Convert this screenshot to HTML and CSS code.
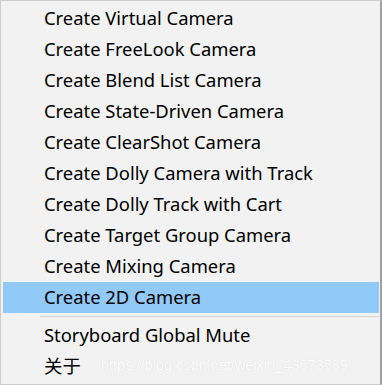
FILE: index.html
```html
<!DOCTYPE html>
<html lang="en">
<head>
  <meta charset="utf-8">
  <title>Cinemachine menu</title>
  <link rel="stylesheet" href="styles.css">
</head>
<body>
  <div class="menu">
    <div class="item">Create Virtual Camera</div>
    <div class="item">Create FreeLook Camera</div>
    <div class="item">Create Blend List Camera</div>
    <div class="item">Create State-Driven Camera</div>
    <div class="item">Create ClearShot Camera</div>
    <div class="item">Create Dolly Camera with Track</div>
    <div class="item">Create Dolly Track with Cart</div>
    <div class="item">Create Target Group Camera</div>
    <div class="item">Create Mixing Camera</div>
    <div class="item active">Create 2D Camera</div>
    <div class="sep"></div>
    <div class="item">Storyboard Global Mute</div>
    <div class="item">关于</div>

    <div class="watermark">https://blog.csdn.net/weixin_43673589</div>
  </div>
</body>
</html>
```

FILE: styles.css
```css
* {
  margin: 0;
  padding: 0;
  box-sizing: border-box;
}

body {
  background: #f2f2f2;
}

.menu {
  position: relative;
  width: 382px;
  height: 385px;
  background: #f2f2f2;
  border: 1px solid #cccccc;
  border-right: 2px solid #a0a0a0;
  padding: 2px 1px 0 2px;
  font-family: "Noto Sans", "Noto Sans CJK SC", sans-serif;
  font-size: 18.4px;
  color: #000;
}

.item {
  height: 31px;
  line-height: 29px;
  padding-left: 41px;
  padding-bottom: 2px;
  white-space: nowrap;
}

.item.active {
  background: #91c9f7;
}

.sep {
  height: 7px;
  margin-left: 37px;
  border-top: 1px solid #d7d7d7;
  position: relative;
  top: 3px;
}

.watermark {
  position: absolute;
  left: 100px;
  top: 356px;
  font-family: "Liberation Sans", Arial, sans-serif;
  font-size: 14.5px;
  color: #ffffff;
  text-shadow: 0 0 1px rgba(0, 0, 0, 0.15);
  white-space: nowrap;
}
```
